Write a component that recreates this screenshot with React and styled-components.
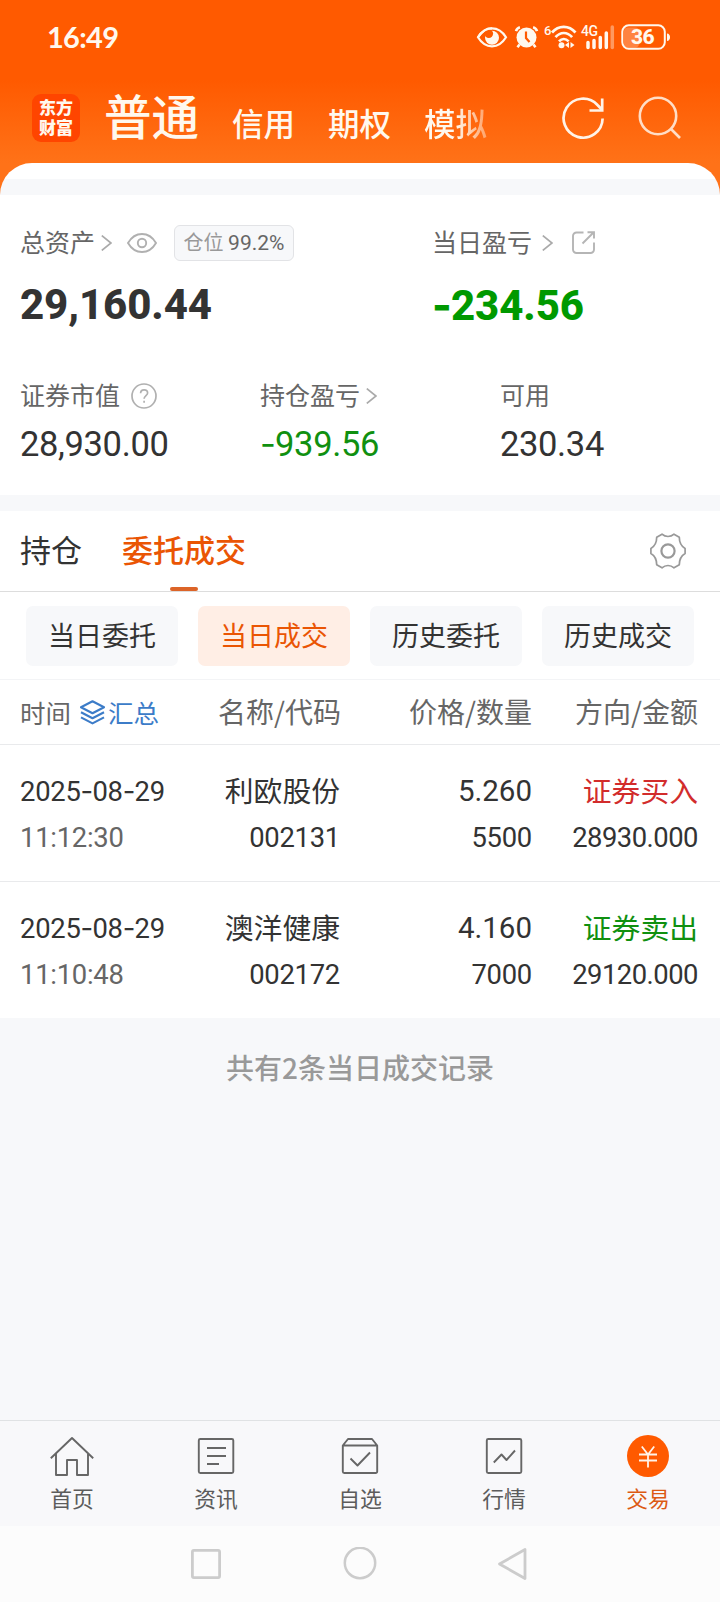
import React from 'react';
import styled, { createGlobalStyle } from 'styled-components';

const palette = {
  brand: '#ff5a00',
  accent: '#ea5504',
  text: '#333333',
  gray: '#666666',
  light: '#999999',
  line: '#e9eaec',
  bg: '#f7f8fa',
  green: '#009900',
  greenText: '#109010',
  red: '#d22c2c',
  blue: '#3c7cc8',
};

const stats = [
  { label: '证券市值', value: '28,930.00', icon: 'help' },
  { label: '持仓盈亏', value: '-939.56', icon: 'chevron', color: palette.greenText },
  { label: '可用', value: '230.34' },
];

const filters = ['当日委托', '当日成交', '历史委托', '历史成交'];

const deals = [
  {
    date: '2025-08-29',
    time: '11:12:30',
    name: '利欧股份',
    code: '002131',
    price: '5.260',
    count: '5500',
    side: '证券买入',
    amount: '28930.000',
    color: palette.red,
  },
  {
    date: '2025-08-29',
    time: '11:10:48',
    name: '澳洋健康',
    code: '002172',
    price: '4.160',
    count: '7000',
    side: '证券卖出',
    amount: '29120.000',
    color: palette.greenText,
  },
];

const GlobalStyle = createGlobalStyle`
  * {
    box-sizing: border-box;
  }
  body {
    margin: 0;
    background: ${palette.bg};
    font-family: 'Noto Sans CJK SC', sans-serif;
    color: ${palette.text};
  }
  svg {
    display: block;
    flex-shrink: 0;
  }
`;

const Chevron = () => (
  <svg width="11" height="16" viewBox="0 0 11 16" fill="none" stroke="#aaa" strokeWidth="1.700">
    <path d="M0.8 0.6 10 8 0.8 15.4" />
  </svg>
);

const EyeIcon = () => (
  <svg width="30" height="20" viewBox="0 0 30 20" fill="none" stroke="#b0b0b0" strokeWidth="1.900">
    <path d="M1 10C4.500 4 9.400 1 15 1s10.500 3 14 9c-3.500 6-8.400 9-14 9S4.500 16 1 10Z" />
    <circle cx="15" cy="10" r="4.200" />
  </svg>
);

const ShareIcon = () => (
  <svg width="23" height="23" viewBox="0 0 23 23" fill="none" stroke="#b5b5b5" strokeWidth="1.900">
    <path d="M11.500 1.500H4.500a3.500 3.500 0 0 0-3.500 3.500v13.500A3.500 3.500 0 0 0 4.500 22h14a3.500 3.500 0 0 0 3.500-3.500v-7" />
    <path d="M10.500 12.500 21.500 1.500M15.500 1.200H22v6.300" />
  </svg>
);

const HelpIcon = () => (
  <svg width="26" height="26" viewBox="0 0 26 26" fill="none" stroke="#b0b0b0" strokeWidth="1.700">
    <circle cx="13" cy="13" r="12" />
    <path d="M9.600 10.300c0-2.200 1.400-3.500 3.500-3.500s3.500 1.300 3.500 3.200c0 2.500-3.500 2.800-3.500 5.800" />
    <path d="M13.100 17.800v2" />
  </svg>
);

const GearIcon = () => (
  <svg width="36" height="36" viewBox="0 0 36 36" fill="none" stroke="#999" strokeWidth="1.700" strokeLinejoin="round">
    <path d="M12 1.200C14 3 15.500 3.500 18 3.500S22 3 24 1.200L29.300 4.300C29.300 9 30 12.500 35.100 15.500V20.500C30 23.500 29.300 27 29.300 31.700L24 34.800C22 33 20.500 32.500 18 32.500S14 33 12 34.800L6.700 31.700C6.700 27 6 23.500 .9 20.500V15.500C6 12.500 6.700 9 6.700 4.300Z" />
    <circle cx="18" cy="18" r="6.600" strokeWidth="2.200" />
  </svg>
);

const LayersIcon = () => (
  <svg width="25" height="25" viewBox="0 0 25 25" fill="none" stroke={palette.blue} strokeWidth="2.100" strokeLinejoin="round">
    <path d="M12.500 1.200 24 7.200 12.500 13.200 1 7.200Z" />
    <path d="M1 12.300l11.500 6 11.500-6M1 17.400l11.500 6 11.500-6" />
  </svg>
);

const StatusIcons = () => (
  <svg width="196" height="28" viewBox="476 23 196 28" fill="none" stroke="#fff8ee" strokeWidth="2.200">
    <path d="M478 37.300c3.600-6 8.300-9 14-9s10.400 3 14 9c-3.600 6-8.300 9-14 9s-10.400-3-14-9Z" />
    <circle cx="492" cy="37.700" r="7" fill="#fff8ee" stroke="none" />
    <circle cx="488.800" cy="33.600" r="4.300" fill={palette.brand} stroke="none" />
    <path d="M478 37.300c3.600-6 8.300-9 14-9" />
    <circle cx="526.500" cy="37.500" r="10" fill="#fff8ee" stroke="none" />
    <path d="M516 31.200c.6-2 2-3.500 3.900-4M537 31.200c-.6-2-2-3.500-3.900-4M519.500 44.500l-2 2.800M533.500 44.500l2 2.800" strokeWidth="2.600" />
    <path d="M526 31.500v6.500l3.500 4" stroke={palette.brand} />
    <path d="M552 32.500c6.500-7.600 17-7.600 23.500 0M555.500 37.200c4.800-5.600 11.800-5.600 16.600 0M559 41.400c3-3.200 6.600-3.200 9.600 0" strokeWidth="2.700" />
    <circle cx="561.500" cy="45.200" r="3" fill="#fff8ee" stroke="none" />
    <path d="m565 45 4-3v6ZM574.500 45l-4-3v6Z" fill="#fff8ee" stroke="none" />
    <path d="M588 42.500v5M594 40.500v7M600.300 37.500v10M606.300 33v14.500" strokeWidth="3.500" strokeLinecap="round" />
    <path d="M612.300 27v20.500" strokeWidth="3.500" strokeLinecap="round" opacity=".4" />
    <rect x="624" y="27.500" width="15" height="20" rx="4" fill="#fff" opacity=".25" stroke="none" />
    <rect x="622.300" y="25.300" width="42.500" height="23.500" rx="6.500" strokeWidth="2" />
    <path d="M667 33.500c4 0 4 7.500 0 7.500Z" fill="#fff8ee" stroke="none" />
  </svg>
);

const RefreshIcon = () => (
  <svg width="44" height="44" viewBox="0 0 44 44" fill="none" stroke="#fff3e8" strokeWidth="2.700">
    <path d="M41.600 22.500A19.500 19.500 0 1 1 36.500 9L41 13.700" />
    <path d="M41.200 2.500v12H28.500" />
  </svg>
);

const SearchIcon = () => (
  <svg width="44" height="44" viewBox="0 0 44 44" fill="none" stroke="#ffddc6" strokeWidth="2.600">
    <circle cx="20" cy="20" r="18.200" />
    <path d="M32.500 32.500 42 42" />
  </svg>
);

const NavIcon = ({ name }) => {
  if (name === '交易') {
    return (
      <svg width="44" height="44" viewBox="0 0 44 44" fill="none" stroke="#fff3e8" strokeWidth="1.800">
        <circle cx="22" cy="22" r="21" fill={palette.brand} stroke="none" />
        <path d="M15.800 12.500l6.200 8 6.200-8M13 20.500h18M13 26.500h18M22 20.500v13" />
      </svg>
    );
  }
  return (
    <svg width="44" height="44" viewBox="0 0 44 44" fill="none" stroke={palette.gray} strokeWidth="1.900" strokeLinejoin="round">
      {name === '首页' && <path d="M.8 24.200 22 4l21.200 20.200M6 19.500V41h11V26h10v15h11V19.500" />}
      {name === '资讯' && (
        <>
          <rect x="4.800" y="5" width="34.500" height="34" rx="1.500" />
          <path d="M13 14h19M13 22h19M13 30h12" />
        </>
      )}
      {name === '自选' && (
        <>
          <path d="M4.800 11.500 10 5h24l5.200 6.500V37.500a1.500 1.500 0 0 1-1.500 1.500H6.300a1.500 1.500 0 0 1-1.500-1.500ZM4.800 11.500h34.400" />
          <path d="M12.500 24.500l7 7L32 18.500" />
        </>
      )}
      {name === '行情' && (
        <>
          <rect x="4.800" y="5" width="34.500" height="34" rx="1.500" />
          <path d="M11.800 28.500l7.700-8 5 5.500 8.500-9.500" />
        </>
      )}
    </svg>
  );
};

// the figure font has a very short hyphen, so dashes are set in a wider one
const Digits = ({ value }) =>
  value.split(/(-)/).map((part, index) => (part === '-' ? <Dash key={index}>-</Dash> : part));

const App = () => {
  return (
    <Screen>
      <GlobalStyle />
      <Header>
        <StatusBar>
          <Clock>16:49</Clock>
          <StatusRight>
            <StatusIcons />
            <StatusTag $left={68} $top={1} $size={13}>6</StatusTag>
            <StatusTag $left={105} $top={1} $size={14}>4G</StatusTag>
            <StatusTag $left={155} $top={4} $size={21} $bold>36</StatusTag>
          </StatusRight>
        </StatusBar>
        <TitleBar>
          <Logo>
            <LogoLine>东方</LogoLine>
            <LogoLine>财富</LogoLine>
          </Logo>
          <MainTitle>普通</MainTitle>
          <Accounts>
            <Account>信用</Account>
            <Account>期权</Account>
            <Account $fade>模拟</Account>
          </Accounts>
          <Actions>
            <RefreshIcon />
            <SearchIcon />
          </Actions>
        </TitleBar>
      </Header>
      <SheetTop />

      <Summary>
        <TotalRow>
          <div>
            <Label>
              <LabelText>总资产</LabelText>
              <IconSlot $gap={6}><Chevron /></IconSlot>
              <IconSlot $gap={15}><EyeIcon /></IconSlot>
              <Badge>仓位 <em>99.2%</em></Badge>
            </Label>
            <Total>29,160.44</Total>
          </div>
          <div>
            <Label>
              <LabelText>当日盈亏</LabelText>
              <IconSlot $gap={10}><Chevron /></IconSlot>
              <IconSlot $gap={19}><ShareIcon /></IconSlot>
            </Label>
            <Total $color={palette.green}><Digits value="-234.56" /></Total>
          </div>
        </TotalRow>
        <StatRow>
          {stats.map((stat) => (
            <div key={stat.label}>
              <StatLabel>
                <LabelText>{stat.label}</LabelText>
                {stat.icon === 'help' && <IconSlot $gap={11}><HelpIcon /></IconSlot>}
                {stat.icon === 'chevron' && <IconSlot $gap={6}><Chevron /></IconSlot>}
              </StatLabel>
              <StatValue $color={stat.color}><Digits value={stat.value} /></StatValue>
            </div>
          ))}
        </StatRow>
      </Summary>
      <Divider />

      <Tabs>
        <Tab>持仓</Tab>
        <Tab $active>委托成交</Tab>
        <GearIcon />
      </Tabs>
      <Filters>
        {filters.map((item) => (
          <Chip key={item} $active={item === '当日成交'}>{item}</Chip>
        ))}
      </Filters>

      <TableHead>
        <TimeHead>
          时间
          <LayersIcon />
          <Collect>汇总</Collect>
        </TimeHead>
        <span>名称/代码</span>
        <span>价格/数量</span>
        <span>方向/金额</span>
      </TableHead>
      {deals.map((deal) => (
        <Deal key={deal.code}>
          <Cell $left>
            <Figure><Digits value={deal.date} /></Figure>
            <Figure $color={palette.gray}>{deal.time}</Figure>
          </Cell>
          <Cell>
            <Name>{deal.name}</Name>
            <Figure>{deal.code}</Figure>
          </Cell>
          <Cell>
            <Price>{deal.price}</Price>
            <Figure>{deal.count}</Figure>
          </Cell>
          <Cell>
            <Name $color={deal.color}>{deal.side}</Name>
            <Figure $tight>{deal.amount}</Figure>
          </Cell>
        </Deal>
      ))}
      <Footnote>共有2条当日成交记录</Footnote>

      <BottomNav>
        {['首页', '资讯', '自选', '行情', '交易'].map((name) => (
          <NavItem key={name} $active={name === '交易'}>
            <NavIcon name={name} />
            {name}
          </NavItem>
        ))}
      </BottomNav>
      <SystemBar>
        <svg width="32" height="34" viewBox="0 0 32 34" fill="none" stroke="#ccc" strokeWidth="2.800">
          <rect x="2.400" y="3.400" width="27.200" height="27.200" rx="1.500" />
        </svg>
        <svg width="34" height="34" viewBox="0 0 34 34" fill="none" stroke="#ccc" strokeWidth="2.500">
          <circle cx="17" cy="16" r="15.200" />
        </svg>
        <svg width="32" height="34" viewBox="0 0 32 34" fill="none" stroke="#ccc" strokeWidth="2.800" strokeLinejoin="round">
          <path d="M27 2.500v29L1.500 17Z" />
        </svg>
      </SystemBar>
    </Screen>
  );
};

const Screen = styled.div`
  display: flex;
  flex-direction: column;
  width: 720px;
  height: 1602px;
  overflow: hidden;
  background: ${palette.bg};
`;

const Header = styled.div`
  height: 195px;
  flex-shrink: 0;
  background: linear-gradient(${palette.brand} 80px, #ff7218 163px);
`;

const StatusBar = styled.div`
  display: flex;
  justify-content: space-between;
  align-items: center;
  height: 74px;
  padding: 0 48px 0 47px;
`;

const Clock = styled.div`
  font: 700 29px/40px Lato, sans-serif;
  letter-spacing: -0.7px;
  color: #fff8ee;
`;

const StatusRight = styled.div`
  position: relative;
`;

const StatusTag = styled.span`
  position: absolute;
  left: ${({ $left }) => $left}px;
  top: ${({ $top }) => $top}px;
  font: ${({ $bold }) => ($bold ? 800 : 500)} ${({ $size }) => $size}px/1 Roboto, sans-serif;
  letter-spacing: -0.5px;
  color: #fff8ee;
`;

const TitleBar = styled.div`
  display: flex;
  align-items: center;
  height: 89px;
  padding: 0 38px 0 32px;
`;

const Logo = styled.div`
  display: flex;
  flex-direction: column;
  align-items: center;
  justify-content: center;
  width: 48px;
  height: 48px;
  margin-top: -1px;
  border-radius: 9px;
  background: #ff4500;
`;

const LogoLine = styled.div`
  font: 900 17px/20px Roboto, 'Noto Sans CJK SC', sans-serif;
  color: #fff8ee;
`;

const MainTitle = styled.div`
  margin: -7px 0 0 24px;
  color: #fff8ee;
  font-size: 47.500px;
  font-weight: 500;
  line-height: 60px;
`;

const Accounts = styled.div`
  display: flex;
  gap: 33px;
  margin: 6px 0 0 33px;
`;

const Account = styled.div`
  font-size: 31.500px;
  line-height: 40px;
  font-weight: 500;
  color: ${({ $fade }) => ($fade ? 'transparent' : '#fff8ee')};
  background: ${({ $fade }) => ($fade ? 'linear-gradient(90deg, #fff8ee 50%, rgba(255, 248, 238, 0.4))' : 'none')};
  background-clip: text;
`;

const Actions = styled.div`
  display: flex;
  gap: 33px;
  margin: -2px 0 0 auto;
`;

const SheetTop = styled.div`
  height: 32px;
  flex-shrink: 0;
  margin-top: -32px;
  border-radius: 32px 32px 0 0;
  background: linear-gradient(#fff 16px, ${palette.bg} 16px);
`;

const Summary = styled.div`
  flex-shrink: 0;
  height: 300px;
  padding: 30px 0 0 20px;
  background: #fff;
`;

const TotalRow = styled.div`
  display: grid;
  grid-template-columns: 412px 1fr;
`;

const Label = styled.div`
  display: flex;
  align-items: center;
  height: 36px;
  font-size: 25px;
  color: ${palette.gray};
`;

const LabelText = styled.span`
  height: 34px;
  line-height: 30px;
`;

const IconSlot = styled.span`
  margin: -1px 0 0 ${({ $gap }) => $gap}px;
`;

const Badge = styled.span`
  width: 120px;
  height: 36px;
  margin-left: 17px;
  border: 1px solid #e2e3e6;
  border-radius: 6px;
  background: ${palette.bg};
  color: ${palette.light};
  font-size: 20px;
  line-height: 32px;
  text-align: center;
  white-space: nowrap;
  & > em {
    font-family: Roboto, sans-serif;
    font-size: 21px;
    font-style: normal;
    color: ${palette.gray};
  }
`;

const Dash = styled.span`
  font-family: Inter, sans-serif;
  letter-spacing: -0.8px;
`;

const Total = styled.div`
  margin-top: 19px;
  font: 800 42px/50px Roboto, sans-serif;
  letter-spacing: -0.1px;
  color: ${({ $color }) => $color || palette.text};
`;

const StatRow = styled.div`
  display: grid;
  grid-template-columns: 240px 240px 1fr;
  margin-top: 50px;
`;

const StatLabel = styled(Label)`
  height: 30px;
`;

const StatValue = styled.div`
  margin-top: 15px;
  font: 400 34.500px/36px Roboto, sans-serif;
  letter-spacing: -0.35px;
  color: ${({ $color }) => $color || palette.text};
`;

const Divider = styled.div`
  height: 16px;
  flex-shrink: 0;
  background: ${palette.bg};
`;

const Tabs = styled.div`
  display: flex;
  align-items: center;
  gap: 40px;
  height: 81px;
  flex-shrink: 0;
  padding: 0 34px 0 20px;
  border-bottom: 1px solid #ddd;
  background: #fff;
  & > svg {
    margin-left: auto;
  }
`;

const Tab = styled.div`
  position: relative;
  font-size: 31px;
  font-weight: ${({ $active }) => ($active ? 500 : 400)};
  line-height: 76px;
  height: 80px;
  color: ${({ $active }) => ($active ? palette.accent : palette.text)};
  &::after {
    content: '';
    display: ${({ $active }) => ($active ? 'block' : 'none')};
    position: absolute;
    left: 50%;
    bottom: 0;
    width: 28px;
    height: 4px;
    margin-left: -14px;
    border-radius: 2px;
    background: #dc6428;
  }
`;

const Filters = styled.div`
  display: grid;
  grid-template-columns: repeat(4, 152px);
  gap: 20px;
  height: 88px;
  flex-shrink: 0;
  padding: 14px 26px 13px;
  border-bottom: 1px solid #f3f4f6;
  background: #fff;
`;

const Chip = styled.div`
  height: 60px;
  border-radius: 7px;
  background: ${({ $active }) => ($active ? '#ffeee5' : palette.bg)};
  color: ${({ $active }) => ($active ? palette.accent : palette.text)};
  font-size: 27px;
  line-height: 58px;
  text-align: center;
`;

const TableHead = styled.div`
  display: grid;
  grid-template-columns: 150px 171px 191px 166px;
  height: 65px;
  flex-shrink: 0;
  padding-left: 20px;
  border-bottom: 1px solid ${palette.line};
  background: #fff;
  color: ${palette.gray};
  font-size: 28px;
  line-height: 62px;
  text-align: right;
`;

const TimeHead = styled.div`
  display: flex;
  align-items: center;
  font-size: 25.500px;
  & > svg {
    margin: 1px 3px 0 9px;
  }
`;

const Collect = styled.span`
  color: ${palette.blue};
`;

const Deal = styled.div`
  display: grid;
  grid-template-columns: 150px 170px 192px 166px;
  height: 136px;
  flex-shrink: 0;
  padding: 28px 0 0 20px;
  background: #fff;
  & + & {
    height: 137px;
    border-top: 1px solid ${palette.line};
  }
`;

const Cell = styled.div`
  display: flex;
  flex-direction: column;
  gap: 14px;
  align-items: ${({ $left }) => ($left ? 'flex-start' : 'flex-end')};
  & > :first-child {
    height: 36px;
    line-height: 36px;
  }
`;

const Figure = styled.div`
  font: 400 27.400px/30px Roboto, sans-serif;
  letter-spacing: ${({ $tight }) => ($tight ? '-0.5px' : '-0.25px')};
  white-space: nowrap;
  color: ${({ $color }) => $color || palette.text};
`;

const Price = styled(Figure)`
  font-size: 29.500px;
  letter-spacing: 0;
`;

const Name = styled.div`
  margin-top: -1px;
  margin-bottom: 1px;
  font-size: 28.800px;
  color: ${({ $color }) => $color || palette.text};
`;

const Footnote = styled.div`
  margin-top: 29px;
  font-size: 28px;
  font-weight: 500;
  line-height: 40px;
  text-align: center;
  color: ${palette.light};
`;

const BottomNav = styled.div`
  display: grid;
  grid-template-columns: repeat(5, 1fr);
  height: 106px;
  flex-shrink: 0;
  margin-top: auto;
  border-top: 1px solid #e0e2e4;
  background: #f8f8fa;
`;

const NavItem = styled.div`
  display: flex;
  flex-direction: column;
  align-items: center;
  padding-top: 13px;
  font-size: 21.800px;
  line-height: 39px;
  color: ${({ $active }) => ($active ? '#dc5a14' : '#5c5c5c')};
`;

const SystemBar = styled.div`
  display: flex;
  justify-content: center;
  align-items: center;
  gap: 121px;
  height: 76px;
  flex-shrink: 0;
  background: #fcfcfc;
`;

export default App;
